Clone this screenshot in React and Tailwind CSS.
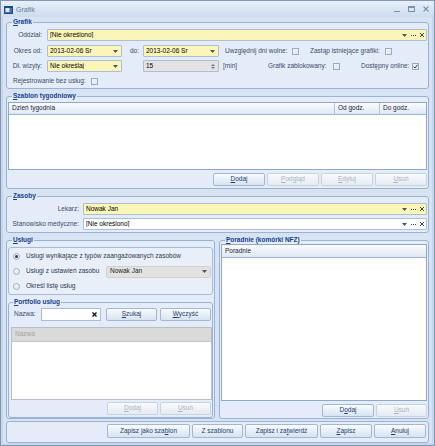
import React from 'react';

const font = "font-['Liberation_Sans',Arial,sans-serif]";

function U({ children }) {
  return <span className="underline">{children}</span>;
}

function Group({ title, className = '', children }) {
  return (
    <fieldset className={`border border-[#9ab2d3] rounded-[3px] bg-[#e3ecf8] min-w-0 ${className}`}>
      <legend className="ml-[4px] px-[1px] h-[8px] leading-[8px] font-bold text-[#15428b]">{title}</legend>
      {children}
    </fieldset>
  );
}

function Caret({ className = '' }) {
  return (
    <svg width="5" height="3" viewBox="0 0 5 3" className={className}>
      <path d="M0 0h5L2.5 3z" fill="#4a5566" />
    </svg>
  );
}

function Field({ children, className = '', yellow, gray, icons, caret, spin }) {
  const bg = yellow ? 'bg-[#fbf6b7]' : gray ? 'bg-[#e3e3e3]' : 'bg-white';
  return (
    <div className={`h-[12px] flex items-center rounded-[1px] border border-[#abbfd9] pl-[2px] pr-[2px] ${bg} ${className}`}>
      <span className="flex-1 truncate text-black">{children}</span>
      {caret && <Caret className="mr-[1px]" />}
      {spin && (
        <div className="flex flex-col gap-[1px] mr-[1px]">
          <svg width="4" height="2" viewBox="0 0 4 2"><path d="M0 2h4L2 0z" fill="#6b7585" /></svg>
          <svg width="4" height="2" viewBox="0 0 4 2"><path d="M0 0h4L2 2z" fill="#6b7585" /></svg>
        </div>
      )}
      {icons && (
        <div className="flex items-center gap-[4px]">
          <Caret />
          <svg width="5" height="1" viewBox="0 0 5 1"><path d="M0 0h1v1H0zM2 0h1v1H2zM4 0h1v1H4z" fill="#3a4455" /></svg>
          <svg width="4" height="4" viewBox="0 0 4 4"><path d="M0 0l4 4M4 0L0 4" stroke="#3a4455" strokeWidth="1" /></svg>
        </div>
      )}
    </div>
  );
}

function Check({ checked, className = '' }) {
  return (
    <div className={`w-[7px] h-[7px] shrink-0 border border-[#9aacc4] bg-linear-to-br from-[#f4f7fb] to-[#dde5ef] flex items-center justify-center ${className}`}>
      {checked && (
        <svg width="5" height="5" viewBox="0 0 5 5">
          <path d="M0.5 2.5l1.5 1.5L4.5 0.8" stroke="#2c3a50" strokeWidth="1" fill="none" />
        </svg>
      )}
    </div>
  );
}

function Radio({ on }) {
  return (
    <div className="w-[7px] h-[7px] shrink-0 rounded-full border border-[#a3afbf] bg-linear-to-br from-[#f5f7fa] to-[#dfe4ea] flex items-center justify-center">
      {on && <div className="w-[3px] h-[3px] rounded-full bg-[#2d3d57]" />}
    </div>
  );
}

function Btn({ children, className = '', disabled }) {
  const look = disabled
    ? 'border-[#c8d3e2] text-[#a9b4c5] from-[#f8fafc] to-[#e6ebf2]'
    : 'border-[#a2b7d4] text-[#213f6e] from-[#f9fbfe] to-[#d7e3f2]';
  return (
    <div className={`h-[13px] shrink-0 flex items-center justify-center rounded-[2px] border bg-linear-to-b ${look} ${className}`}>
      {children}
    </div>
  );
}

function Label({ children, className = '' }) {
  return <span className={`shrink-0 text-[#3a4d66] ${className}`}>{children}</span>;
}

export default function App() {
  return (
    <div className={`w-[435px] h-[446px] border border-[#8296b3] bg-[#c6d6eb] flex flex-col text-[6.5px] leading-none ${font}`}>
      {/* title bar */}
      <div className="h-[16px] shrink-0 flex items-center bg-linear-to-b from-[#e7eff9] to-[#cfdcee] pl-[3px] pr-[5px]">
        <svg width="9" height="9" viewBox="0 0 9 9">
          <rect x="0.5" y="1.5" width="8" height="7" fill="#3f6fb4" stroke="#1f4a8a" />
          <rect x="1.5" y="3" width="4" height="4" fill="#dce8f7" />
          <rect x="0.5" y="1.5" width="8" height="1.5" fill="#1f4a8a" />
        </svg>
        <span className="ml-[3px] text-[#5a79a3] text-[7px]">Grafik</span>
        <div className="ml-auto flex items-center gap-[8px]">
          <svg width="6" height="6" viewBox="0 0 6 6"><path d="M0 5.5h6" stroke="#7890b2" strokeWidth="1" /></svg>
          <svg width="7" height="6" viewBox="0 0 7 6"><rect x="0.5" y="0.5" width="6" height="5" fill="none" stroke="#7890b2" /><path d="M0.5 1.5h6" stroke="#7890b2" /></svg>
          <svg width="6" height="6" viewBox="0 0 6 6"><path d="M0.5 0.5l5 5M5.5 0.5l-5 5" stroke="#7890b2" strokeWidth="1.1" /></svg>
        </div>
      </div>

      {/* client */}
      <div className="flex-1 mx-[2px] mb-[2px] bg-[#d7e3f3] px-[3px] pt-[1px] flex flex-col">
        {/* Grafik */}
        <Group title={<><U>G</U>rafik</>} className="h-[71px] shrink-0 px-[1px] pt-[3px] pb-[1px]">
          <div className="flex items-center h-[12px]">
            <Label className="w-[35px] text-right pr-[1px]">Oddział:</Label>
            <Field className="ml-[4px] flex-1" yellow icons>[Nie określono]</Field>
          </div>
          <div className="flex items-center h-[12px] mt-[4px]">
            <Label className="w-[35px] text-right pr-[1px]">Okres od:</Label>
            <Field className="ml-[4px] w-[75px]" yellow caret>2013-02-06 Śr</Field>
            <Label className="w-[21px] pl-[8px]">do:</Label>
            <Field className="w-[76px]" yellow caret>2013-02-06 Śr</Field>
            <Label className="ml-[6px] w-[67px]">Uwzględnij dni wolne:</Label>
            <Check />
            <Label className="ml-[11px] w-[74px]">Zastąp istniejące grafiki:</Label>
            <Check className="ml-[1px]" />
          </div>
          <div className="flex items-center h-[12px] mt-[3px]">
            <Label className="w-[35px] text-right pr-[1px]">Dł. wizyty:</Label>
            <Field className="ml-[4px] w-[75px]" yellow caret>Nie określaj</Field>
            <Field className="ml-[21px] w-[76px] text-[#333]" gray spin>15</Field>
            <Label className="ml-[4px] w-[45px]">[min]</Label>
            <Label className="w-[64px]">Grafik zablokowany:</Label>
            <Check className="ml-[1px]" />
            <Label className="ml-[21px] w-[50px]">Dostępny online:</Label>
            <Check className="ml-[1px]" checked />
          </div>
          <div className="flex items-center h-[12px] mt-[3px] pl-[5px]">
            <Label className="w-[77px]">Rejestrowanie bez usług:</Label>
            <Check className="ml-[1px]" />
          </div>
        </Group>

        {/* Szablon tygodniowy */}
        <Group title={<><U>S</U>zablon tygodniowy</>} className="h-[97px] shrink-0 mt-[3px] px-[1px] pt-[2px] pb-[2px]">
          <div className="h-[68px] border border-[#8ea8cb] bg-white flex flex-col">
            <div className="h-[12px] flex border-b border-[#9fb4d2] bg-linear-to-b from-[#fbfcfe] to-[#dde7f4] text-[#1c2633]">
              <div className="flex-1 flex items-center pl-[3px]">Dzień tygodnia</div>
              <div className="w-[45px] flex items-center pl-[3px] border-l border-[#b3c5dd]">Od godz.</div>
              <div className="w-[47px] flex items-center pl-[3px] border-l border-[#b3c5dd]">Do godz.</div>
            </div>
          </div>
          <div className="flex justify-end gap-[2px] mt-[3px]">
            <Btn className="w-[52px]"><U>D</U>odaj</Btn>
            <Btn className="w-[52px]" disabled><U>P</U>odgląd</Btn>
            <Btn className="w-[52px]" disabled><U>E</U>dytuj</Btn>
            <Btn className="w-[52px]" disabled><U>U</U>suń</Btn>
          </div>
        </Group>

        {/* Zasoby */}
        <Group title={<><U>Z</U>asoby</>} className="h-[41px] shrink-0 mt-[3px] px-[1px] pt-[3px] pb-[2px]">
          <div className="flex items-center h-[12px]">
            <Label className="w-[72px] text-right pr-[1px]">Lekarz:</Label>
            <Field className="ml-[3px] flex-1" yellow icons>Nowak Jan</Field>
          </div>
          <div className="flex items-center h-[12px] mt-[3px]">
            <Label className="w-[72px] text-right pr-[1px]">Stanowisko medyczne:</Label>
            <Field className="ml-[3px] flex-1" icons>[Nie określono]</Field>
          </div>
        </Group>

        <div className="h-[183px] shrink-0 mt-[3px] flex gap-[4px]">
          {/* Usługi */}
          <Group title={<><U>U</U>sługi</>} className="w-[209px] shrink-0 px-[1px] pt-[3px]">
            <div className="h-[48px] rounded-[3px] border border-[#a4bbd9] bg-[#e8eff9] pt-[1px]">
              <div className="flex items-center h-[15px] pl-[4px]">
                <Radio on />
                <span className="ml-[6px] text-[#2a3a50]">Usługi wynikające z typów zaangażowanych zasobów</span>
              </div>
              <div className="flex items-center h-[15px] pl-[4px] pr-[1px]">
                <Radio />
                <span className="ml-[6px] text-[#2a3a50]">Usługi z ustawień zasobu</span>
                <div className="ml-auto w-[105px] h-[12px] rounded-[2px] border border-[#cfcfcf] bg-[#e2e2e2] flex items-center pl-[3px] pr-[3px]">
                  <span className="flex-1 text-[#222]">Nowak Jan</span>
                  <Caret />
                </div>
              </div>
              <div className="flex items-center h-[15px] pl-[4px]">
                <Radio />
                <span className="ml-[6px] text-[#2a3a50]">Określ listę usług</span>
              </div>
            </div>

            <Group title={<><U>P</U>ortfolio usług</>} className="h-[120px] mt-[3px] pt-[1px] pb-[2px]">
              <div className="flex items-center h-[14px] pl-[5px]">
                <Label className="w-[27px]">Nazwa:</Label>
                <div className="w-[60px] h-[13px] border border-[#a9bdd8] bg-white flex items-center justify-end pr-[3px]">
                  <svg width="5" height="5" viewBox="0 0 5 5"><path d="M0.5 0.5l4 4M4.5 0.5l-4 4" stroke="#111" strokeWidth="1.3" /></svg>
                </div>
                <Btn className="ml-[5px] w-[51px]"><U>S</U>zukaj</Btn>
                <Btn className="ml-[3px] w-[51px]"><U>W</U>yczyść</Btn>
              </div>
              <div className="h-[73px] mt-[6px] ml-[2px] border border-[#b9bec6] bg-white flex flex-col">
                <div className="h-[14px] flex items-center pl-[3px] bg-[#dadada] border-b border-[#c6c6c6] text-[#a3a3a3]">Nazwa</div>
              </div>
              <div className="flex justify-end gap-[2px] mt-[2px] pr-[1px]">
                <Btn className="w-[51px]" disabled><U>D</U>odaj</Btn>
                <Btn className="w-[51px]" disabled><U>U</U>suń</Btn>
              </div>
            </Group>
          </Group>

          {/* Poradnie */}
          <Group title={<><U>P</U>oradnie (komórki NFZ)</>} className="flex-1 px-[1px] pb-[1px]">
            <div className="h-[157px] border border-[#8ea8cb] bg-white flex flex-col">
              <div className="h-[13px] flex items-center pl-[3px] border-b border-[#9fb4d2] bg-linear-to-b from-[#fbfcfe] to-[#dde7f4] text-[#1c2633]">Poradnie</div>
            </div>
            <div className="flex justify-end gap-[2px] mt-[3px]">
              <Btn className="w-[52px]">D<U>o</U>daj</Btn>
              <Btn className="w-[51px]" disabled><U>U</U>suń</Btn>
            </div>
          </Group>
        </div>

        {/* bottom buttons */}
        <div className="h-[22px] shrink-0 mt-[2px] rounded-[3px] border border-[#9ab2d3] bg-[#e3ecf8] flex justify-end gap-[2px] pt-[2px] pr-[2px]">
          <Btn className="w-[83px] h-[14px]">Zapisz jako sza<U>b</U>lon</Btn>
          <Btn className="w-[51px] h-[14px]">Z szablonu</Btn>
          <Btn className="w-[73px] h-[14px]">Zapisz i za<U>t</U>wierdź</Btn>
          <Btn className="w-[52px] h-[14px]"><U>Z</U>apisz</Btn>
          <Btn className="w-[52px] h-[14px]"><U>A</U>nuluj</Btn>
        </div>
      </div>
    </div>
  );
}
